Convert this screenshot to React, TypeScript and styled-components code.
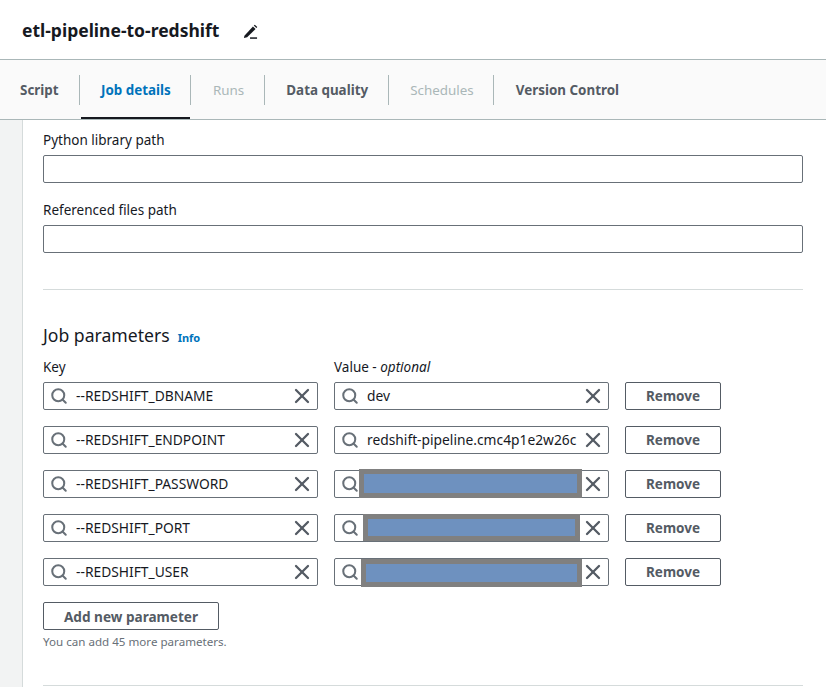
import React from 'react';
import styled, { createGlobalStyle } from 'styled-components';
import { Search, X } from 'lucide-react';

const GlobalStyle = createGlobalStyle`
  html, body {
    margin: 0;
    padding: 0;
    background: #fff;
    overflow: hidden;
  }
  body {
    font-family: "Noto Sans", "Open Sans", sans-serif;
    color: #16191f;
  }
`;

const tabs = [
  { label: 'Script', state: 'normal' },
  { label: 'Job details', state: 'active' },
  { label: 'Runs', state: 'disabled' },
  { label: 'Data quality', state: 'normal' },
  { label: 'Schedules', state: 'disabled' },
  { label: 'Version Control', state: 'normal' },
] as const;

const params = [
  { key: '--REDSHIFT_DBNAME', value: 'dev' },
  { key: '--REDSHIFT_ENDPOINT', value: 'redshift-pipeline.cmc4p1e2w26c' },
  { key: '--REDSHIFT_PASSWORD', value: '', mask: { left: 24, right: 26, top: -2, bottom: -1 } },
  { key: '--REDSHIFT_PORT', value: '', mask: { left: 28, right: 28, top: -1, bottom: 0 } },
  { key: '--REDSHIFT_USER', value: '', mask: { left: 26, right: 26, top: 0, bottom: -2 } },
];

function App() {
  return (
    <Page>
      <GlobalStyle />
      <Header>
        <Title>etl-pipeline-to-redshift</Title>
        <EditIcon viewBox="0 0 16 16">
          <path d="M1.5 12.6 L10.6 2.6 L13.4 5.2 L4.4 14.2 L1 14.8 Z" fill="#16191f" />
          <path d="M11.5 1.6 L12.6 0.8 L15.2 3.2 L14.3 4.3 Z" fill="#16191f" />
          <path d="M7.5 15 H15" stroke="#16191f" strokeWidth="1.6" />
        </EditIcon>
      </Header>
      <TabBar>
        {tabs.map((tab) => (
          <Tab key={tab.label} $state={tab.state}>{tab.label}</Tab>
        ))}
      </TabBar>
      <Body>
        <SideRail />
        <Content>
          <FieldLabel>Python library path</FieldLabel>
          <TextInput />
          <FieldLabel $top={16}>Referenced files path</FieldLabel>
          <TextInput />
          <Divider $top={36} />
          <SectionHead>
            <SectionTitle>Job parameters</SectionTitle>
            <InfoLink>Info</InfoLink>
          </SectionHead>
          <ColumnHead>
            <FieldLabel>Key</FieldLabel>
            <FieldLabel>Value - <em>optional</em></FieldLabel>
          </ColumnHead>
          <Rows>
            {params.map((param) => (
              <Row key={param.key}>
                <SearchBox>
                  <SearchIcon size={18} strokeWidth={2.7} />
                  <BoxText>{param.key}</BoxText>
                  <ClearIcon size={24} strokeWidth={2.3} />
                </SearchBox>
                <SearchBox>
                  <SearchIcon size={18} strokeWidth={2.7} />
                  <BoxText>{param.value}</BoxText>
                  <ClearIcon size={24} strokeWidth={2.3} />
                  {param.mask && <Redaction style={param.mask} />}
                </SearchBox>
                <RemoveButton>Remove</RemoveButton>
              </Row>
            ))}
          </Rows>
          <AddButton>Add new parameter</AddButton>
          <Hint>You can add 45 more parameters.</Hint>
          <Divider $top={35} />
        </Content>
      </Body>
    </Page>
  );
}

export default App;

const Page = styled.div`
  width: 826px;
  height: 687px;
  overflow: hidden;
  display: flex;
  flex-direction: column;
`;

const Header = styled.header`
  height: 59px;
  box-sizing: border-box;
  padding: 0 0 0 22px;
  display: flex;
  align-items: center;
  gap: 24px;
`;

const Title = styled.h1`
  margin: 0;
  font-size: 17.5px;
  line-height: 24px;
  font-weight: 700;
  color: #16191f;
`;

const EditIcon = styled.svg`
  width: 15px;
  height: 15px;
  margin-top: 3px;
`;

const TabBar = styled.nav`
  height: 61px;
  box-sizing: border-box;
  display: flex;
  align-items: stretch;
  background: #fafafa;
  border-top: 1px solid #aab7b8;
  border-bottom: 1px solid #aab7b8;
`;

const tabColor = { normal: '#545b64', active: '#0073bb', disabled: '#aab7b8' };

const Tab = styled.div<{ $state: 'normal' | 'active' | 'disabled' }>`
  position: relative;
  display: flex;
  align-items: center;
  padding: 0 20.6px 0 21.5px;
  font-size: 13.4px;
  font-weight: ${(p) => (p.$state === 'disabled' ? 400 : 700)};
  color: ${(p) => tabColor[p.$state]};

  &:first-child {
    padding: 0 21px 0 20px;
  }

  &:not(:last-child)::after {
    content: '';
    position: absolute;
    right: 0;
    top: 15px;
    height: 30px;
    width: 1px;
    background: #aab7b8;
  }

  ${(p) =>
    p.$state === 'active' &&
    `
    &::before {
      content: '';
      position: absolute;
      left: 1px;
      right: 1px;
      bottom: 0;
      height: 2px;
      background: #16191f;
    }
  `}
`;

const Body = styled.div`
  flex: 1;
  display: flex;
  min-height: 0;
`;

const SideRail = styled.aside`
  width: 22px;
  background: #f2f3f3;
  border-right: 1px solid #d5dbdb;
`;

const Content = styled.main`
  width: 760px;
  padding: 9px 0 0 20px;
`;

const FieldLabel = styled.label<{ $top?: number }>`
  display: block;
  margin-top: ${(p) => p.$top ?? 0}px;
  font-size: 13.5px;
  line-height: 22px;
  color: #16191f;

  em {
    font-style: italic;
  }
`;

const TextInput = styled.div`
  box-sizing: border-box;
  margin-top: 4px;
  height: 28px;
  border: 1px solid #687078;
  border-radius: 2px;
  background: #fff;
`;

const Divider = styled.hr<{ $top: number }>`
  margin: ${(p) => p.$top}px 0 0;
  border: 0;
  height: 1px;
  background: #d5dbdb;
`;

const SectionHead = styled.div`
  margin-top: 32px;
  display: flex;
  align-items: baseline;
  gap: 8px;
  height: 27px;
`;

const SectionTitle = styled.h2`
  margin: 0;
  font-size: 17.6px;
  line-height: 27px;
  font-weight: 400;
  color: #16191f;
`;

const InfoLink = styled.a`
  font-size: 11px;
  font-weight: 700;
  color: #0073bb;
`;

const ColumnHead = styled.div`
  margin-top: 7px;
  display: grid;
  grid-template-columns: 275px 275px;
  column-gap: 16px;
`;

const Rows = styled.div`
  margin-top: 4px;
  display: flex;
  flex-direction: column;
  gap: 16px;
`;

const Row = styled.div`
  display: grid;
  grid-template-columns: 275px 275px 96px;
  column-gap: 16px;
  height: 28px;
`;

const SearchBox = styled.div`
  position: relative;
  box-sizing: border-box;
  height: 28px;
  display: flex;
  align-items: center;
  padding: 0 3px 0 6px;
  border: 1px solid #687078;
  border-radius: 2px;
  background: #fff;
`;

const SearchIcon = styled(Search)`
  flex: none;
  color: #687078;
`;

const BoxText = styled.span`
  flex: 1;
  margin-left: 8px;
  min-width: 0;
  padding-bottom: 2px;
  font-size: 13.8px;
  white-space: nowrap;
  overflow: hidden;
  color: #16191f;
`;

const ClearIcon = styled(X)`
  flex: none;
  margin-left: 1px;
  color: #545b64;
`;

const Redaction = styled.div`
  position: absolute;
  box-sizing: border-box;
  background: #6e91bf;
  border: 5px solid #808080;
`;

const RemoveButton = styled.button`
  box-sizing: border-box;
  height: 28px;
  padding: 0;
  border: 1px solid #545b64;
  border-radius: 2px;
  background: #fff;
  font-family: inherit;
  font-size: 13.5px;
  font-weight: 700;
  color: #545b64;
`;

const AddButton = styled.button`
  display: block;
  box-sizing: border-box;
  margin-top: 16px;
  width: 176px;
  height: 28px;
  padding: 0;
  border: 1px solid #545b64;
  border-radius: 2px;
  background: #fff;
  font-family: inherit;
  font-size: 13.6px;
  font-weight: 700;
  color: #545b64;
`;

const Hint = styled.div`
  margin-top: 4px;
  font-size: 11.6px;
  line-height: 16px;
  color: #687078;
`;
